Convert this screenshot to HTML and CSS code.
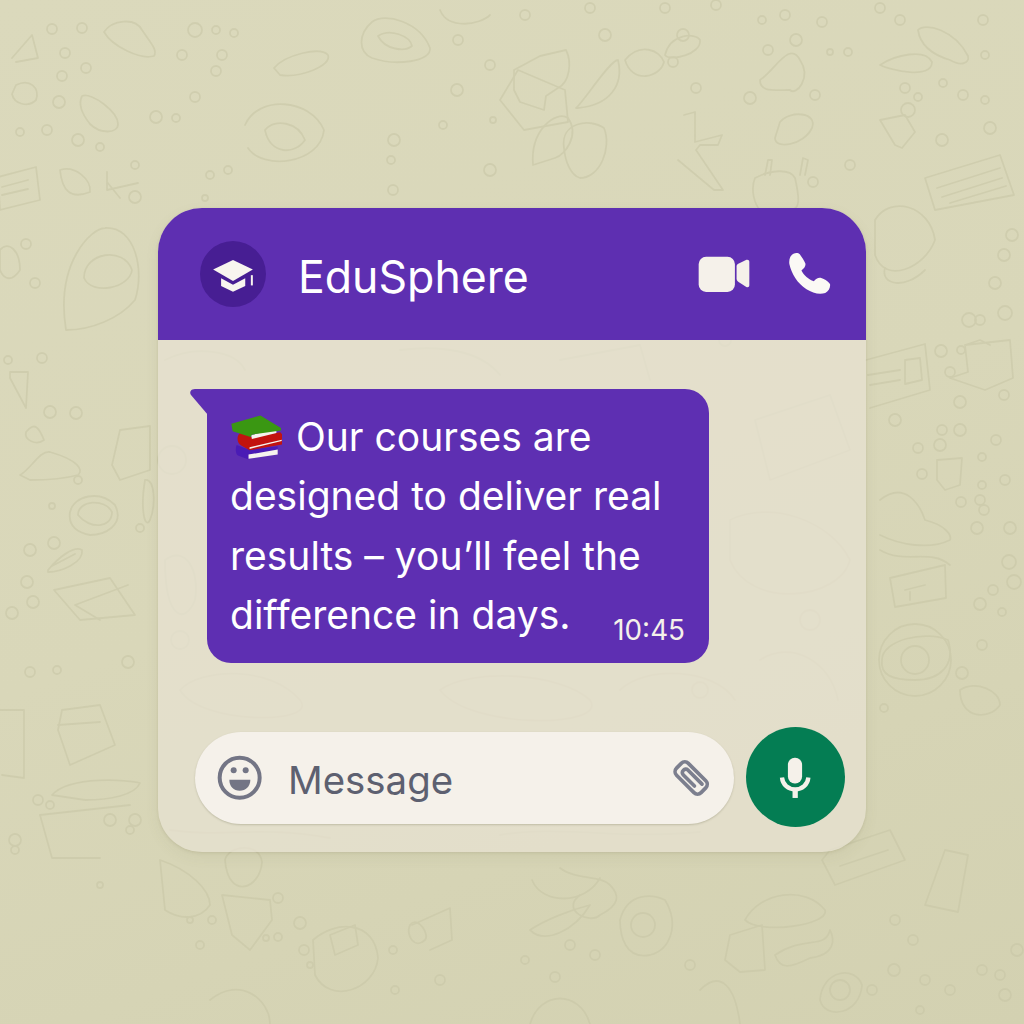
FILE: index.html
```html
<!DOCTYPE html>
<html lang="en">
<head>
<meta charset="utf-8">
<title>EduSphere</title>
<link rel="stylesheet" href="styles.css">
</head>
<body>
<svg class="doodles" viewBox="0 0 1024 1024" aria-hidden="true">
  <g class="big">
    <path d="M104 32C112 20 135 17 142 30 150 42 158 50 154 56 140 60 112 46 104 32Z"/>
    <path d="M274 68C285 55 320 46 328 55 332 66 300 78 280 75Z"/>
    <path d="M372 22C385 12 420 22 430 48 432 62 395 66 372 58 358 52 358 34 372 22Z"/>
    <path d="M378 36C390 28 410 36 412 46 405 52 385 50 378 36Z"/>
    <path d="M82 96C92 92 118 112 118 124 118 134 100 134 90 124 82 114 78 104 82 96Z"/>
    <path d="M16 85C30 78 40 88 36 100 28 108 14 104 12 94Z"/>
    <path d="M60 170C75 165 92 180 90 192 70 200 62 190 60 170Z"/>
    <path d="M107 172V190L138 183M107 182L120 198"/>
    <path d="M-2 177L36 167 40 200 0 210ZM2 187L28 180M2 195L28 189"/>
    <path d="M12 58L32 35 38 58 16 62"/>
    <path d="M66 330C55 262 92 228 105 228 135 226 145 270 135 300 120 318 92 330 66 330Z"/>
    <path d="M84 278C84 252 124 246 132 270 130 288 92 296 84 278Z"/>
    <path d="M245 125C258 95 310 98 324 130 320 165 262 170 248 148"/>
    <path d="M265 130C275 118 298 122 305 140 295 155 270 155 265 130Z"/>
    <path d="M514 70L540 56 566 50C572 62 570 82 558 88L546 96 544 110 520 102 514 90Z"/>
    <path d="M625 60C640 42 660 50 664 62 660 78 632 84 625 60Z"/>
    <path d="M576 108C585 100 610 60 618 60 624 85 610 105 578 108Z"/>
    <path d="M500 100L518 70 565 90 568 122 524 130Z"/>
    <path d="M533 165C530 130 556 110 568 118 580 135 565 155 555 158Z"/>
    <path d="M564 148C560 122 590 118 604 128 612 148 600 178 580 178 570 175 565 160 564 148Z"/>
    <path d="M665 55C670 34 695 32 700 40 702 54 670 62 665 55Z"/>
    <path d="M760 80C775 70 790 40 800 60 812 78 796 96 790 90 772 90 760 92 760 80Z"/>
    <path d="M684 115L695 112V142L722 135 718 145 700 145 696 150 723 190 714 190 678 160"/>
    <path d="M755 178C770 170 790 168 795 178 800 200 800 210 790 210H760C755 205 750 190 755 178Z"/>
    <path d="M765 175L768 160 772 160 770 175M800 175L803 158 808 160 805 175"/>
    <path d="M780 122C790 110 818 112 812 128 804 145 775 150 775 138Z"/>
    <path d="M880 65C895 55 925 48 932 62 932 80 890 70 880 65Z"/>
    <path d="M918 30C925 22 955 30 968 56 970 64 960 66 950 60 930 54 920 44 918 30Z"/>
    <path d="M880 120L905 115 915 132 902 148 895 145Z"/>
    <path d="M925 178L1000 155 1014 195 935 210Z"/>
    <path d="M937 188L1000 168M942 197L1002 178M950 203L1006 186"/>
    <path d="M875 220C890 195 930 205 935 240 925 268 885 285 875 255Z"/>
    <path d="M885 268C880 285 905 290 925 270"/>
    <path d="M866 360L925 344 930 390 870 408M868 375L900 370M870 385L900 380M905 360L920 358 922 380 905 384Z"/>
    <path d="M965 345L1010 340 1013 378 985 390 950 378 968 372ZM965 345L980 340 990 345"/>
    <path d="M937 460L962 458 960 485 945 490 937 480Z"/>
    <path d="M880 500C905 480 920 505 925 520 945 525 952 535 950 540 930 550 900 545 880 535"/>
    <path d="M880 550C905 565 930 548 950 565"/>
    <path d="M890 578L945 565 946 598 895 607ZM905 590L925 585M910 600V592"/>
    <path d="M882 660C882 640 925 630 948 640 956 665 940 680 915 680 892 680 880 675 882 660Z"/>
    <circle cx="915" cy="660" r="14"/>
    <circle cx="915" cy="660" r="36"/>
    <path d="M10 372L28 372 26 408 10 378Z"/>
    <path d="M26 432C35 420 40 430 44 440 36 446 24 440 26 432Z"/>
    <path d="M20 475C30 470 40 450 50 452 78 460 84 470 78 475 60 480 36 480 30 480Z"/>
    <path d="M120 430L150 426 150 470 120 480 112 465Z"/>
    <path d="M70 512C74 495 100 490 115 505 125 525 105 535 90 535 75 532 68 525 70 512Z"/>
    <path d="M78 515C78 500 105 498 112 512 112 528 90 530 78 515Z"/>
    <path d="M48 570C58 558 74 545 82 550 84 562 62 572 48 572ZM52 566L75 554"/>
    <path d="M54 590L110 578 135 615 80 620Z"/>
    <path d="M75 605L128 585M75 605L100 620"/>
    <path d="M62 710L100 705 115 745 70 765 58 730Z"/>
    <path d="M58 725L100 722"/>
    <path d="M-2 710H24V778L2 775"/>
    <path d="M52 795C70 775 130 780 140 783 135 795 110 800 85 800Z"/>
    <path d="M40 815L130 805"/>
    <path d="M40 815L52 858H100"/>
    <path d="M160 860C190 870 210 890 210 905 200 920 180 920 165 910Z"/>
    <path d="M225 860C228 845 260 842 262 862 260 890 228 900 225 860Z"/>
    <path d="M222 895L270 900 272 920 250 950 232 935Z"/>
    <path d="M330 935L355 925 358 945 335 955Z"/>
    <path d="M210 1000C240 975 270 1000 270 1024"/>
    <path d="M313 940C335 920 375 920 378 958 375 990 330 1005 315 975Z"/>
    <path d="M560 868C575 880 600 875 610 885 620 895 620 905 600 915 590 925 560 910 580 895 560 880Z"/>
    <path d="M620 920C628 890 655 895 665 900 680 925 670 950 650 955 625 960 620 935 620 920Z"/>
    <circle cx="643" cy="925" r="12"/>
    <path d="M730 935L762 925 765 970 740 972 725 960Z"/>
    <path d="M745 920C760 892 805 885 825 910 830 925 760 935 745 920Z"/>
    <path d="M775 955C805 935 825 950 830 930 835 940 835 955 810 958 790 968 780 970 775 955Z"/>
    <path d="M530 930C545 920 570 910 590 905 575 930 545 945 530 930Z"/>
    <path d="M532 880C542 905 585 905 600 878"/>
    <path d="M925 905L945 850 968 855 958 912Z"/>
    <path d="M530 1024C540 990 580 990 590 1024"/>
    <path d="M820 1000C822 970 855 965 862 985 860 1015 825 1020 820 1000Z"/>
    <circle cx="840" cy="990" r="10"/>
    <path d="M830 850L890 830 905 860 835 885 822 860Z"/>
    <path d="M840 866L888 850"/>
    <path d="M410 925C418 915 430 935 425 940 415 950 405 935 410 925Z"/>
    <path d="M412 925L450 908 452 940 430 950"/>
    <path d="M700 990C720 970 735 985 740 1024"/>
    <path d="M960 690C975 680 1000 690 1000 705 990 720 960 720 960 690Z"/>
    <path d="M440 10C448 30 480 25 490 15"/>
    <path d="M0 250C8 240 20 250 20 270 12 282 4 280 0 270Z"/>
    <path d="M145 480C155 478 156 505 150 520 145 530 140 510 145 480Z"/>
    <path d="M180 690C200 668 270 665 300 700 320 725 200 725 180 690Z"/>
    <path d="M440 690C470 668 560 672 590 700 610 728 470 730 440 690Z"/>
    <path d="M620 690C645 665 715 668 735 700"/>
    <path d="M755 420L830 395 850 450 770 480Z"/>
    <path d="M730 520C770 500 830 520 850 560 840 600 750 610 730 560Z"/>
    <path d="M760 660C790 640 830 660 838 700"/>
    <path d="M165 360C195 345 235 350 245 370M400 350C440 345 480 350 500 375M560 360L640 345 650 380"/>
    <path d="M165 560C185 545 200 570 195 600 185 625 165 620 165 560Z"/>
    <path d="M170 830C220 838 260 825 330 838M500 835C560 825 620 840 700 832"/>
    <circle cx="172" cy="460" r="14"/><circle cx="180" cy="640" r="9"/>
    <circle cx="725" cy="340" r="6"/><circle cx="810" cy="620" r="10"/><circle cx="700" cy="690" r="8"/>
  </g>
  <g class="dots">
    <circle cx="195" cy="30" r="7"/><circle cx="216" cy="30" r="4"/><circle cx="234" cy="33" r="4"/><circle cx="65" cy="53" r="5"/><circle cx="82" cy="28" r="5"/><circle cx="52" cy="29" r="5"/><circle cx="182" cy="55" r="5"/><circle cx="216" cy="71" r="5"/><circle cx="222" cy="55" r="5"/><circle cx="86" cy="68" r="5"/><circle cx="62" cy="76" r="5"/><circle cx="195" cy="97" r="5"/><circle cx="156" cy="117" r="6"/><circle cx="176" cy="118" r="4"/><circle cx="59" cy="102" r="6"/><circle cx="20" cy="132" r="4"/><circle cx="47" cy="130" r="5"/><circle cx="78" cy="140" r="6"/><circle cx="100" cy="147" r="4"/><circle cx="135" cy="197" r="6"/><circle cx="135" cy="165" r="4"/><circle cx="228" cy="170" r="4"/><circle cx="210" cy="175" r="4"/><circle cx="205" cy="198" r="3"/><circle cx="26" cy="244" r="5"/><circle cx="35" cy="283" r="5"/>
    <circle cx="458" cy="40" r="5"/><circle cx="525" cy="15" r="5"/><circle cx="590" cy="8" r="5"/><circle cx="665" cy="8" r="5"/><circle cx="605" cy="35" r="6"/><circle cx="683" cy="35" r="6"/><circle cx="673" cy="62" r="5"/><circle cx="716" cy="5" r="5"/><circle cx="762" cy="20" r="4"/><circle cx="785" cy="15" r="5"/><circle cx="796" cy="40" r="6"/><circle cx="768" cy="50" r="5"/><circle cx="822" cy="22" r="5"/><circle cx="880" cy="8" r="5"/><circle cx="900" cy="20" r="5"/><circle cx="983" cy="20" r="5"/><circle cx="985" cy="55" r="4"/><circle cx="848" cy="52" r="4"/><circle cx="830" cy="52" r="3"/><circle cx="918" cy="97" r="4"/><circle cx="943" cy="83" r="4"/><circle cx="905" cy="88" r="5"/><circle cx="908" cy="110" r="7"/><circle cx="963" cy="95" r="5"/><circle cx="815" cy="95" r="5"/><circle cx="942" cy="140" r="6"/><circle cx="990" cy="128" r="6"/><circle cx="985" cy="100" r="4"/><circle cx="813" cy="182" r="5"/><circle cx="850" cy="165" r="5"/><circle cx="750" cy="98" r="6"/><circle cx="696" cy="88" r="5"/><circle cx="490" cy="65" r="5"/><circle cx="457" cy="90" r="6"/><circle cx="490" cy="170" r="6"/><circle cx="394" cy="140" r="6"/><circle cx="443" cy="125" r="4"/><circle cx="493" cy="120" r="3"/><circle cx="391" cy="160" r="4"/><circle cx="393" cy="190" r="5"/>
    <circle cx="8" cy="360" r="4"/><circle cx="42" cy="358" r="5"/><circle cx="50" cy="412" r="6"/><circle cx="76" cy="413" r="6"/><circle cx="78" cy="480" r="4"/><circle cx="52" cy="506" r="3"/><circle cx="140" cy="528" r="4"/><circle cx="30" cy="550" r="6"/><circle cx="54" cy="543" r="6"/><circle cx="27" cy="582" r="6"/><circle cx="12" cy="613" r="6"/><circle cx="33" cy="602" r="6"/><circle cx="30" cy="672" r="5"/><circle cx="57" cy="670" r="4"/><circle cx="128" cy="662" r="6"/><circle cx="38" cy="800" r="5"/><circle cx="15" cy="840" r="6"/><circle cx="110" cy="820" r="6"/><circle cx="135" cy="820" r="6"/><circle cx="50" cy="805" r="4"/><circle cx="15" cy="850" r="4"/><circle cx="100" cy="885" r="3"/><circle cx="130" cy="830" r="4"/>
    <circle cx="1012" cy="235" r="6"/><circle cx="1004" cy="255" r="6"/><circle cx="995" cy="283" r="6"/><circle cx="969" cy="320" r="7"/><circle cx="1005" cy="313" r="7"/><circle cx="980" cy="320" r="5"/><circle cx="961" cy="350" r="4"/><circle cx="941" cy="351" r="6"/><circle cx="950" cy="372" r="5"/><circle cx="1004" cy="395" r="5"/><circle cx="960" cy="402" r="6"/><circle cx="996" cy="440" r="5"/><circle cx="942" cy="430" r="5"/><circle cx="960" cy="430" r="6"/><circle cx="895" cy="420" r="6"/><circle cx="940" cy="445" r="6"/><circle cx="982" cy="457" r="4"/><circle cx="982" cy="485" r="4"/><circle cx="918" cy="448" r="5"/><circle cx="922" cy="474" r="5"/><circle cx="1005" cy="480" r="5"/><circle cx="980" cy="500" r="5"/><circle cx="961" cy="502" r="5"/><circle cx="984" cy="510" r="5"/><circle cx="977" cy="528" r="6"/><circle cx="1010" cy="528" r="6"/><circle cx="1009" cy="562" r="7"/><circle cx="993" cy="590" r="5"/><circle cx="1014" cy="582" r="7"/><circle cx="980" cy="604" r="6"/><circle cx="982" cy="645" r="5"/><circle cx="1002" cy="612" r="4"/><circle cx="962" cy="673" r="6"/><circle cx="884" cy="708" r="4"/>
    <circle cx="278" cy="898" r="5"/><circle cx="300" cy="923" r="6"/><circle cx="310" cy="965" r="3"/><circle cx="278" cy="937" r="4"/><circle cx="266" cy="938" r="3"/><circle cx="200" cy="945" r="4"/><circle cx="190" cy="920" r="3"/><circle cx="212" cy="920" r="4"/><circle cx="304" cy="950" r="5"/><circle cx="393" cy="950" r="4"/><circle cx="440" cy="980" r="5"/><circle cx="395" cy="990" r="4"/><circle cx="570" cy="945" r="5"/><circle cx="595" cy="955" r="5"/><circle cx="555" cy="977" r="5"/><circle cx="525" cy="960" r="4"/><circle cx="690" cy="965" r="5"/><circle cx="895" cy="920" r="5"/><circle cx="894" cy="970" r="6"/><circle cx="872" cy="990" r="5"/><circle cx="913" cy="940" r="5"/><circle cx="982" cy="970" r="5"/><circle cx="1000" cy="975" r="5"/><circle cx="1017" cy="950" r="6"/><circle cx="925" cy="980" r="5"/><circle cx="950" cy="990" r="5"/><circle cx="920" cy="1010" r="4"/><circle cx="1005" cy="995" r="6"/>
  </g>
</svg>

<main class="chat">
  <header class="chat-head">
    <span class="avatar">
      <svg class="cap" viewBox="150 150 156 130" aria-hidden="true">
        <path d="M168 200L228 171 288 200 228 235Z"/>
        <path d="M192 226L228 246 265 226V250L228 267 192 250Z"/>
        <rect x="282" y="217" width="6" height="31"/>
      </svg>
    </span>
    <h1 class="title">EduSphere</h1>
    <div class="head-actions">
      <svg class="video" viewBox="115 83 155 110" aria-hidden="true">
        <rect x="117" y="85" width="108" height="105" rx="22"/>
        <path d="M230 114C230 110 232 108 235 106L258 95C264 93 268 96 268 101V170C268 175 264 177 259 175L236 160C232 157 230 155 230 150Z"/>
      </svg>
      <svg class="phone" viewBox="385 70 128 128" aria-hidden="true">
        <path d="M392 84C398 73 414 70 420 77 426 85 433 96 437 105 438 113 432 120 425 125 432 139 446 151 462 157 468 150 474 146 482 147 492 150 503 156 510 165 512 176 506 187 496 192 478 198 458 192 440 181 412 163 396 135 389 106 388 97 389 90 392 84Z"/>
      </svg>
    </div>
  </header>

  <section class="chat-body">
    <article class="bubble">
      <p class="msg"><svg class="books" viewBox="216 640 160 144" aria-hidden="true">
          <path class="b-blue" d="M236 736L272 750 360 740V750L272 765V780L240 768C232 762 232 745 236 736Z"/>
          <path class="b-page" d="M272 765L360 750V765L272 778Z"/>
          <path class="b-red" d="M250 698L282 712 368 698 373 704V735L275 752 250 738C236 730 234 706 250 698Z"/>
          <path class="b-page" d="M275 743L372 720V724L275 748Z"/>
          <path class="b-page" d="M280 706L356 688V700L282 718Z"/>
          <path class="b-green" d="M220 672L308 647 370 685V692L282 705 278 712 224 695Z"/>
        </svg> Our courses are<br>designed to deliver real<br>results – you’ll feel the<br>difference in days.</p>
      <time class="stamp">10:45</time>
    </article>

    <div class="composer">
      <div class="field">
        <svg class="smile" viewBox="178 144 138 138" aria-hidden="true">
          <circle class="ring" cx="246" cy="212" r="60"/>
          <circle cx="228" cy="190" r="9"/>
          <circle cx="264" cy="190" r="9"/>
          <path d="M215 218H278C278 238 264 251 246 251 228 251 215 238 215 218Z"/>
        </svg>
        <span class="placeholder">Message</span>
        <svg class="clip" viewBox="215 465 125 132" aria-hidden="true">
          <g transform="translate(278 531) rotate(-45)">
            <rect x="-25" y="-52" width="50" height="104" rx="15"/>
            <path d="M10 36V-24C10 -36 -10 -36 -10 -24V24"/>
          </g>
        </svg>
      </div>
      <button class="mic" type="button" aria-label="Record voice message">
        <svg class="mic-icon" viewBox="540 465 100 130" aria-hidden="true">
          <rect x="567" y="470" width="43" height="78" rx="21"/>
          <path class="mic-arc" d="M549 530C551 552 568 566 589 566 610 566 627 552 629 530"/>
          <rect x="581" y="565" width="16" height="27"/>
        </svg>
      </button>
    </div>
  </section>
</main>
</body>
</html>
```

FILE: styles.css
```css
* { box-sizing: border-box; }

html, body { height: 100%; }

body {
  margin: 0;
  padding-top: 208px;
  background: linear-gradient(160deg, #dbd9bc 0%, #d9d7b9 50%, #d3d1b1 100%);
  font-family: Inter, "Noto Sans", "Liberation Sans", sans-serif;
  overflow: hidden;
}

.doodles {
  position: absolute;
  top: 0;
  left: 0;
  width: 1024px;
  height: 1024px;
  fill: none;
  stroke: #c9c7a7;
  stroke-width: 1.8;
  stroke-linecap: round;
  stroke-linejoin: round;
  opacity: .6;
  filter: blur(.7px);
}

.chat {
  position: relative;
  width: 708px;
  height: 644px;
  margin: 0 auto;
  border-radius: 44px;
  overflow: hidden;
  background: rgba(231, 226, 209, .75);
  box-shadow: 0 1px 3px rgba(120, 118, 80, .18), 0 5px 14px rgba(120, 118, 80, .08);
}

.chat-head {
  display: flex;
  align-items: center;
  height: 132px;
  padding: 0 35px 0 42px;
  background: #5e2fb1;
  color: #fff;
}

.avatar {
  display: flex;
  align-items: center;
  justify-content: center;
  flex: none;
  width: 66px;
  height: 66px;
  border-radius: 50%;
  background: #471e93;
}
.cap { width: 52px; height: 43px; fill: #f8f5ef; }

.title {
  margin: 6px 0 0 32px;
  font-size: 44.6px;
  font-weight: 400;
  line-height: 1;
}

.head-actions {
  display: flex;
  align-items: center;
  gap: 38px;
  margin-left: auto;
}
.video { width: 52px; height: 37px; fill: #f5f1ea; }
.phone { width: 43px; height: 43px; fill: #fbf9f5; margin-top: -2px; }

.chat-body { padding: 49px 21px 0 37px; }

.bubble {
  position: relative;
  width: 502px;
  height: 274px;
  margin-left: 12px;
  padding: 18px 22px 0 23px;
  border-radius: 0 24px 24px 24px;
  background: #5e2fb2;
  color: #fff;
}
.bubble::before {
  content: "";
  position: absolute;
  top: 0;
  left: -17px;
  width: 18px;
  height: 26px;
  background: #5e2fb2;
  clip-path: path("M18 0H5C1 0 -1 3 1 6L18 26Z");
}

.msg {
  margin: 0;
  font-size: 39px;
  line-height: 59.3px;
  white-space: nowrap;
}
.books {
  width: 53px;
  height: 48px;
  margin-right: 2px;
  vertical-align: -10px;
}
.b-green { fill: #3a9712; }
.b-red { fill: #c2130f; }
.b-blue { fill: #4a1bb5; }
.b-page { fill: #f6f3ee; }

.stamp {
  position: absolute;
  right: 24px;
  bottom: 18px;
  font-size: 27.8px;
  line-height: 1;
  color: #f5f1ea;
}

.composer {
  display: flex;
  align-items: center;
  gap: 12px;
  margin-top: 64px;
}

.field {
  display: flex;
  align-items: center;
  width: 540px;
  height: 92px;
  margin-top: 2px;
  padding: 0 22px;
  border-radius: 46px;
  background: #f5f1ea;
  box-shadow: 0 1px 2px rgba(110, 110, 80, .3);
}
.smile { flex: none; width: 46px; height: 46px; fill: #737585; }
.smile .ring { fill: none; stroke: #737585; stroke-width: 12; }
.placeholder {
  margin: 0 0 -2px 25px;
  font-size: 38.4px;
  line-height: 1.2;
  padding-top: 3px;
  color: #5d6070;
}
.clip {
  flex: none;
  width: 42px;
  height: 44px;
  margin-left: auto;
  fill: none;
  stroke: #7c7f8e;
  stroke-width: 11;
  stroke-linejoin: round;
  stroke-linecap: round;
}

.mic {
  display: flex;
  align-items: center;
  justify-content: center;
  flex: none;
  width: 99px;
  height: 100px;
  padding: 0;
  border: 0;
  border-radius: 50%;
  background: #047d53;
}
.mic-icon { width: 33px; height: 43px; fill: #f5f1ea; }
.mic-arc { fill: none; stroke: #f5f1ea; stroke-width: 13; }
```
